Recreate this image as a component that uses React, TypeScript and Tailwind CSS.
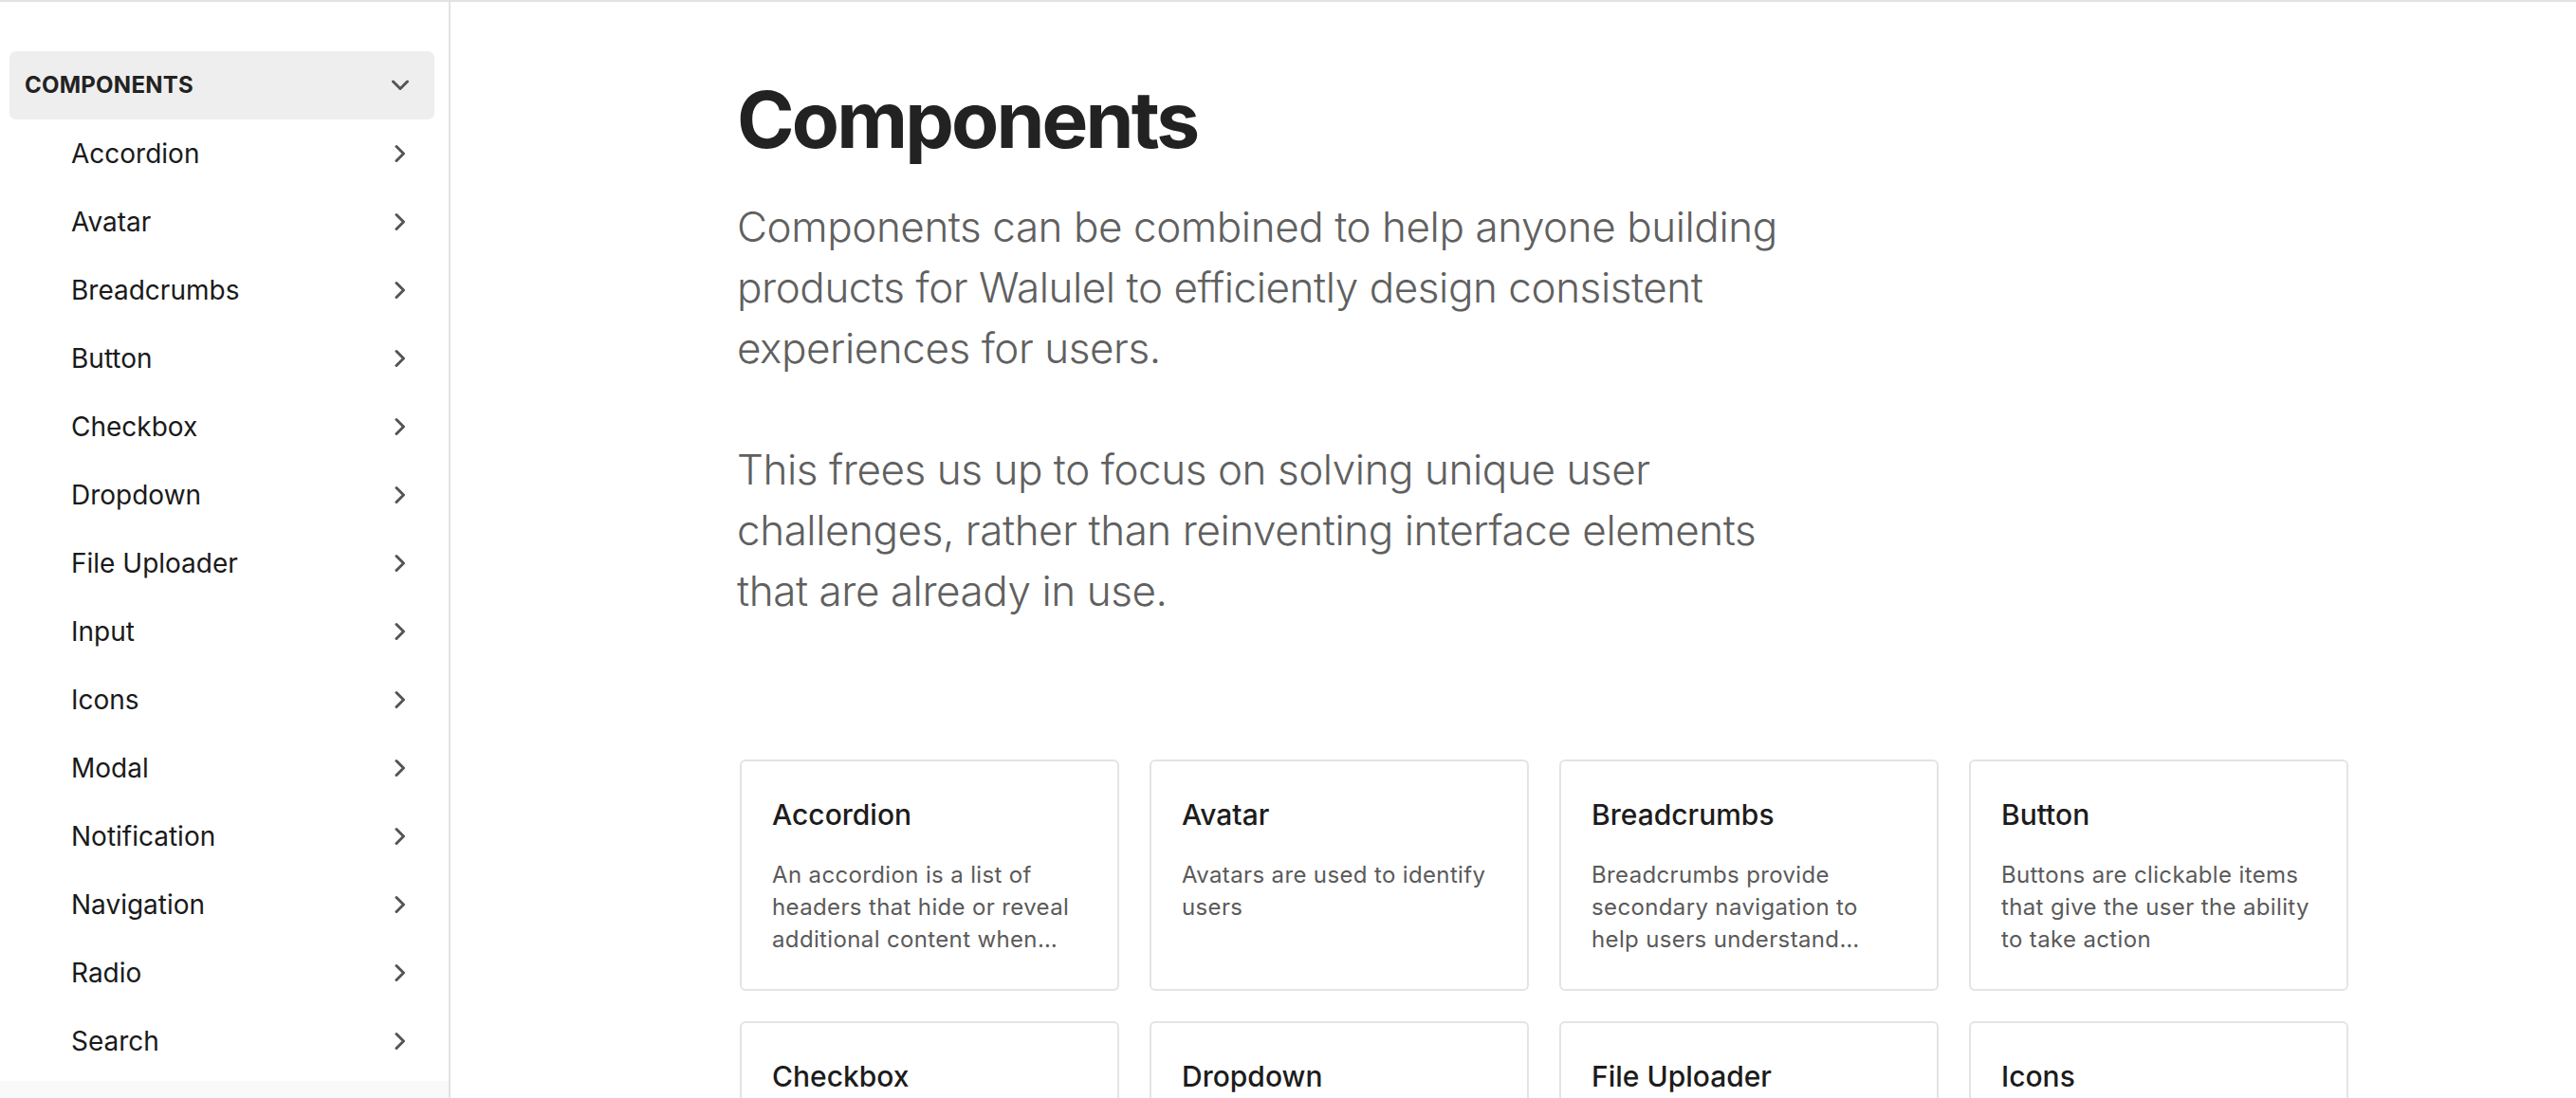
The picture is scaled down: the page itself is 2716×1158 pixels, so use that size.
import React from "react";

const items = [
  "Accordion",
  "Avatar",
  "Breadcrumbs",
  "Button",
  "Checkbox",
  "Dropdown",
  "File Uploader",
  "Input",
  "Icons",
  "Modal",
  "Notification",
  "Navigation",
  "Radio",
  "Search",
];

const cards = [
  {
    title: "Accordion",
    desc: "An accordion is a list of headers that hide or reveal additional content when selected",
  },
  { title: "Avatar", desc: "Avatars are used to identify users" },
  {
    title: "Breadcrumbs",
    desc: "Breadcrumbs provide secondary navigation to help users understand where they are",
  },
  {
    title: "Button",
    desc: "Buttons are clickable items that give the user the ability to take action",
  },
  {
    title: "Checkbox",
    desc: "Checkboxes let users select one or more options from a list",
  },
  {
    title: "Dropdown",
    desc: "Dropdowns let users choose one option from a list of choices",
  },
  {
    title: "File Uploader",
    desc: "File uploaders let users select and upload files from their device",
  },
  {
    title: "Icons",
    desc: "Icons are visual symbols used to represent ideas and actions",
  },
];

function ChevronRight() {
  return (
    <svg width="12" height="20" viewBox="0 0 12 20" fill="none" className="shrink-0">
      <path
        d="M2 2.5 L9.5 10 L2 17.5"
        stroke="#555555"
        strokeWidth="3"
        strokeLinecap="round"
        strokeLinejoin="round"
      />
    </svg>
  );
}

function ChevronDown() {
  return (
    <svg width="20" height="12" viewBox="0 0 20 12" fill="none" className="shrink-0">
      <path
        d="M2.5 2 L10 9.5 L17.5 2"
        stroke="#555555"
        strokeWidth="3"
        strokeLinecap="round"
        strokeLinejoin="round"
      />
    </svg>
  );
}

export default function App() {
  return (
    <div
      className="flex h-[1158px] w-[2716px] overflow-hidden border-t-2 border-[#e2e2e2] bg-white"
      style={{ fontFamily: "Inter, 'Noto Sans', 'Liberation Sans', sans-serif" }}
    >
      <aside className="flex w-[475px] shrink-0 flex-col border-r-2 border-[#e2e2e2] pt-[52px]">
        <div className="pl-[10px] pr-[15px]">
          <div className="flex h-[72px] items-center justify-between rounded-[7px] bg-[#eeeeee] pl-[16px] pr-[26px]">
            <span className="text-[24px] font-bold uppercase tracking-[0.01em] text-[#222222]">
              Components
            </span>
            <ChevronDown />
          </div>
          {items.map((item) => (
            <div
              key={item}
              className="flex h-[72px] items-center justify-between pl-[65px] pr-[30px]"
            >
              <span className="text-[28px] text-[#1a1a1a]">{item}</span>
              <ChevronRight />
            </div>
          ))}
        </div>
        <div className="mt-[6px] h-[80px] shrink-0 bg-[#f9f9f9]" />
      </aside>

      <main className="flex-1 pl-[302px] pt-[75px]">
        <h1 className="text-[82px] font-bold leading-[100px] tracking-[-0.035em] text-[#222222]">
          Components
        </h1>
        <p className="mt-[30px] max-w-[1140px] text-[44px] font-light leading-[64px] tracking-[-0.01em] text-[#606060]">
          Components can be combined to help anyone building products for Walulel to
          efficiently design consistent experiences for users.
        </p>
        <p className="mt-[64px] max-w-[1140px] text-[44px] font-light leading-[64px] tracking-[-0.01em] text-[#606060]">
          This frees us up to focus on solving unique user challenges, rather than
          reinventing interface elements that are already in use.
        </p>

        <div className="ml-[3px] mt-[146px] grid grid-cols-[repeat(4,400px)] gap-[32px]">
          {cards.map((c) => (
            <div
              key={c.title}
              className="h-[244px] rounded-[6px] border-2 border-[#e4e4e4] px-[32px] pt-[36px]"
            >
              <div className="text-[30px] font-medium leading-[40px] text-[#1c1c1c]">
                {c.title}
              </div>
              <p className="mt-[27px] line-clamp-3 text-[24px] leading-[34px] tracking-[0.015em] text-[#5a5a5a]">
                {c.desc}
              </p>
            </div>
          ))}
        </div>
      </main>
    </div>
  );
}
